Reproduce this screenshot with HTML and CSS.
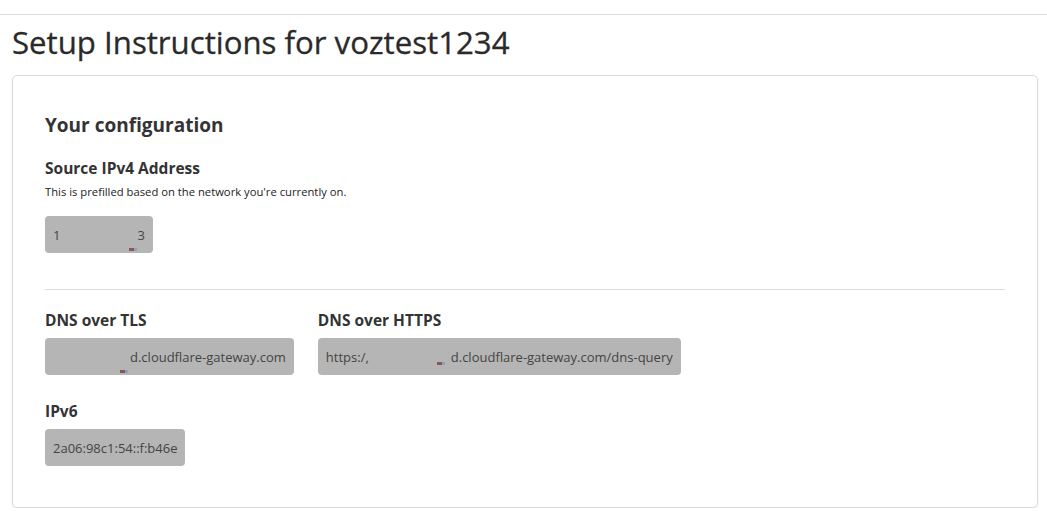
FILE: index.html
```html
<!DOCTYPE html>
<html>
<head>
<meta charset="utf-8">
<link rel="stylesheet" href="styles.css">
</head>
<body>
<div class="topbar"></div>
<main class="page">
  <h1 class="title">Setup Instructions for voztest1234</h1>
  <section class="card">
    <h2 class="card-title">Your configuration</h2>
    <div class="field">
      <h3 class="label">Source IPv4 Address</h3>
      <p class="hint">This is prefilled based on the network you're currently on.</p>
      <div class="value ipv4"><span>1</span><span class="redact r-ip"><i class="mark mark-low"></i></span><span>3</span></div>
    </div>
    <hr class="divider">
    <div class="row">
      <div class="field">
        <h3 class="label">DNS over TLS</h3>
        <div class="value tls"><span class="redact r-tls"><i class="mark mark-low"></i></span><span>d.cloudflare-gateway.com</span></div>
      </div>
      <div class="field">
        <h3 class="label">DNS over HTTPS</h3>
        <div class="value doh"><span>https:/,</span><span class="redact r-doh"><i class="mark mark-mid"></i></span><span>d.cloudflare-gateway.com/dns-query</span></div>
      </div>
    </div>
    <div class="field">
      <h3 class="label">IPv6</h3>
      <div class="value">2a06:98c1:54::f:b46e</div>
    </div>
  </section>
</main>
</body>
</html>
```
FILE: styles.css
```css
html, body {
  margin: 0;
  padding: 0;
  background: #fff;
  font-family: "Open Sans", "Noto Sans", sans-serif;
  color: #333;
}
.topbar {
  height: 14px;
  border-bottom: 1px solid #dcdcdc;
}
.page {
  padding: 0 9px 0 12px;
}
.title {
  margin: 8px 0 0 0;
  font-size: 31.2px;
  font-weight: 400;
  line-height: 38px;
  color: #2a2a2a;
  -webkit-text-stroke: 0.3px #2a2a2a;
}
.card {
  margin-top: 14px;
  border: 1px solid #dadada;
  border-radius: 5px;
  box-shadow: 0 1px 2px rgba(0,0,0,0.08);
  padding: 36px 32px 41px 32px;
}
.card-title {
  margin: 0 0 20px 0;
  font-size: 19px;
  font-weight: 700;
  line-height: 26px;
}
.label {
  margin: 0 0 8px 0;
  font-size: 15.5px;
  font-weight: 700;
  line-height: 20px;
}
.label + .hint { margin-top: -2px; }
.hint {
  margin: 0 0 16px 0;
  font-size: 11.25px;
  line-height: 16px;
  color: #222;
}
.value {
  display: inline-flex;
  align-items: center;
  height: 37px;
  padding: 0 8px;
  background: #b5b5b5;
  border-radius: 4px;
  font-size: 13px;
  color: #444;
  box-sizing: border-box;
}
.redact {
  display: inline-block;
  position: relative;
  height: 37px;
}
.r-ip { width: 77px; }
.r-tls { width: 77px; }
.r-doh { width: 82px; }
.mark {
  position: absolute;
  width: 8px;
  height: 3px;
  background: linear-gradient(to right, #8a5656 0 5px, #7fa6c4 5px 8px);
}
.mark-low { right: 2px; bottom: 2px; }
.r-ip .mark-low { right: 0; }
.mark-mid { right: 6px; bottom: 10px; }
.divider {
  border: 0;
  border-top: 1px solid #dcdcdc;
  margin: 36px 0 20px 0;
}
.row {
  display: flex;
  gap: 24px;
  margin-bottom: 21px;
}
```
